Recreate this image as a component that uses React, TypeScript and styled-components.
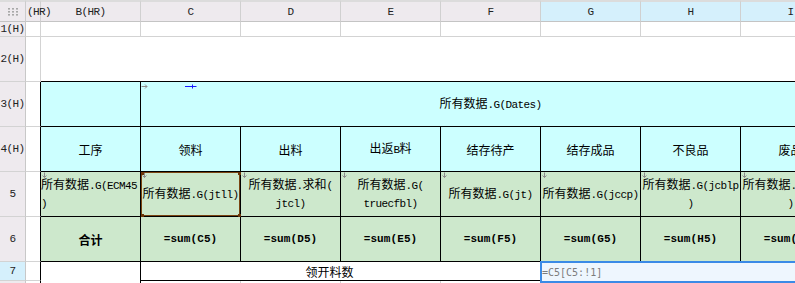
import React from "react";
import styled, { createGlobalStyle } from "styled-components";

const GRID = "#d3d3d3";
const BLACK = "#000000";
const HEAD_BG = "#eeeaee";
const HEAD_ACTIVE = "#d5f0fc";
const CYAN = "#ccffff";
const GREEN = "#cde8cc";

const GlobalStyle = createGlobalStyle`
  html, body { margin: 0; padding: 0; background: #ffffff; overflow: hidden; }
  #root { width: 795px; height: 283px; }
`;

const Viewport = styled.div`
  width: 795px;
  height: 283px;
  overflow: hidden;
  background: #ffffff;
`;

const Sheet = styled.div`
  display: grid;
  grid-template-columns: 26px 15px repeat(9, 100px);
  grid-template-rows: 22px 15px 45px 45px 45px 45px 45px 19px 20px;
  width: max-content;
  font-family: "Noto Sans CJK SC", "Noto Sans", sans-serif;
  font-size: 12px;
  color: #000;
`;

const Corner = styled.div`
  grid-column: 1;
  grid-row: 1;
  background: ${HEAD_BG};
  border-top: 2px solid #dcdcdc;
  border-right: 1px solid #cccccc;
  border-bottom: 1px solid #c4c4c4;
  display: flex;
  align-items: center;
  justify-content: center;
  position: relative;
  z-index: 3;
`;

const ColHead = styled.div<{ $col: number; $active?: boolean; $left?: boolean }>`
  grid-column: ${(p) => p.$col};
  grid-row: 1;
  background: ${(p) => (p.$active ? HEAD_ACTIVE : HEAD_BG)};
  border-top: 2px solid #dcdcdc;
  border-right: 1px solid #d0d0d0;
  border-bottom: 1px solid #c4c4c4;
  display: flex;
  align-items: center;
  justify-content: ${(p) => (p.$left ? "flex-start" : "center")};
  padding-left: ${(p) => (p.$left ? "1px" : "0")};
  overflow: visible;
  white-space: nowrap;
  min-width: 0;
  font-family: "Liberation Mono", monospace;
  font-size: 11px;
  letter-spacing: -0.6px;
  color: #222;
  position: relative;
  z-index: ${(p) => (p.$left ? 2 : 1)};
`;

const RowHead = styled.div<{ $row: number; $active?: boolean }>`
  grid-column: 1;
  grid-row: ${(p) => p.$row};
  background: ${(p) => (p.$active ? HEAD_ACTIVE : HEAD_BG)};
  border-right: 1px solid #c8c8c8;
  border-bottom: 1px solid #d3d3d3;
  display: flex;
  align-items: center;
  justify-content: center;
  white-space: nowrap;
  font-family: "Liberation Mono", monospace;
  font-size: 11px;
  letter-spacing: -0.6px;
  color: #222;
`;

type CellProps = {
  $col: string | number;
  $row: string | number;
  $bg?: string;
  $rb?: string;
  $bb?: string;
  $align?: "left" | "center";
  $bold?: boolean;
  $padRight?: number;
};

const Cell = styled.div<CellProps>`
  grid-column: ${(p) => p.$col};
  grid-row: ${(p) => p.$row};
  background: ${(p) => p.$bg ?? "#ffffff"};
  border-right: 1px solid ${(p) => p.$rb ?? GRID};
  border-bottom: 1px solid ${(p) => p.$bb ?? GRID};
  display: flex;
  flex-direction: column;
  justify-content: center;
  align-items: ${(p) => (p.$align === "left" ? "flex-start" : "center")};
  text-align: ${(p) => (p.$align === "left" ? "left" : "center")};
  padding-right: ${(p) => p.$padRight ?? 0}px;
  position: relative;
  min-width: 0;
  line-height: 15px;
  white-space: nowrap;
  font-weight: ${(p) => (p.$bold ? 700 : 400)};
`;

const Line = styled.div`
  display: block;
  white-space: nowrap;
`;

const Latin = styled.span`
  font-family: "Liberation Mono", "DejaVu Sans Mono", monospace;
  font-size: 11px;
  letter-spacing: -0.6px;
`;

const SumText = styled.span`
  font-family: "Liberation Mono", monospace;
  font-size: 11px;
  font-weight: 700;
  letter-spacing: 0.1px;
`;

const Marker = styled.svg`
  position: absolute;
  left: 0;
  top: 0;
`;

const BlueMark = styled.svg`
  position: absolute;
  left: 44px;
  top: 1px;
`;

const Selection = styled.div`
  position: absolute;
  inset: 0;
  border: 1px solid #7a4512;
  pointer-events: none;
`;

const Handle = styled.span<{ $x: "l" | "r"; $y: "t" | "b" }>`
  position: absolute;
  width: 3px;
  height: 3px;
  background: #6b3508;
  ${(p) => (p.$x === "l" ? "left: -1px;" : "right: -2px;")}
  ${(p) => (p.$y === "t" ? "top: -1px;" : "bottom: -2px;")}
`;

const Editor = styled.div`
  position: absolute;
  left: -1px;
  top: -1px;
  width: 262px;
  height: 22px;
  box-sizing: border-box;
  border: 2px solid #3a8ae6;
  background: #eef6fe;
  display: flex;
  align-items: center;
  padding-left: 0px;
  font-family: "DejaVu Sans Mono", monospace;
  font-size: 10px;
  color: #7c7c7c;
  z-index: 2;
`;

const Mixed: React.FC<{ text: string }> = ({ text }) => (
  <>
    {text
      .split(/([\x00-\x7F]+)/)
      .filter(Boolean)
      .map((s, i) =>
        /^[\x00-\x7F]+$/.test(s) ? <Latin key={i}>{s}</Latin> : <span key={i}>{s}</span>
      )}
  </>
);

const Lines: React.FC<{ lines: string[] }> = ({ lines }) => (
  <>
    {lines.map((l, i) => (
      <Line key={i}>
        <Mixed text={l} />
      </Line>
    ))}
  </>
);

const DownArrow = () => (
  <Marker width="7" height="7" viewBox="0 0 7 7">
    <path d="M3.5 0.5 V5.5 M1.5 3.5 L3.5 5.5 L5.5 3.5" stroke="#8c8c8c" strokeWidth="1" fill="none" />
  </Marker>
);

const RightArrow = () => (
  <Marker width="8" height="7" viewBox="0 0 8 7" style={{ top: 1 }}>
    <path d="M0.5 3.5 H6 M4 1.5 L6 3.5 L4 5.5" stroke="#8c8c8c" strokeWidth="1" fill="none" />
  </Marker>
);

const GridDots = () => (
  <svg width="12" height="9" viewBox="0 0 12 9">
    {[0, 1, 2].map((r) =>
      [0, 1, 2].map((c) => (
        <rect key={`${r}-${c}`} x={1 + c * 4} y={1 + r * 3} width="2" height="1.6" fill="#a8a8a8" />
      ))
    )}
  </svg>
);

const letters = ["B(HR)", "C", "D", "E", "F", "G", "H", "I", "J"];
const headers4 = ["工序", "领料", "出料", "出返B料", "结存待产", "结存成品", "不良品", "废品", "备注"];
const row5: { lines: string[]; left?: boolean }[] = [
  { lines: ["所有数据.G(ECM45", ")"], left: true },
  { lines: ["所有数据.G(jtll)"] },
  { lines: ["所有数据.求和(", "jtcl)"] },
  { lines: ["所有数据.G(", "truecfbl)"] },
  { lines: ["所有数据.G(jt)"] },
  { lines: ["所有数据.G(jccp)"] },
  { lines: ["所有数据.G(jcblp", ")"] },
  { lines: ["所有数据.G(jcfpl", ")"] },
  { lines: ["所有数据.G(bz)"] },
];
const sums = ["合计", "=sum(C5)", "=sum(D5)", "=sum(E5)", "=sum(F5)", "=sum(G5)", "=sum(H5)", "=sum(I5)", "=sum(J5)"];

export default function App() {
  return (
    <Viewport>
      <GlobalStyle />
      <Sheet>
        <Corner>
          <GridDots />
        </Corner>
        <ColHead $col={2} $left>
          (HR)
        </ColHead>
        {letters.map((l, i) => (
          <ColHead key={l} $col={i + 3} $active={i >= 5}>
            {l}
          </ColHead>
        ))}

        <RowHead $row={2}>1(H)</RowHead>
        <RowHead $row={3}>2(H)</RowHead>
        <RowHead $row={4}>3(H)</RowHead>
        <RowHead $row={5}>4(H)</RowHead>
        <RowHead $row={6}>5</RowHead>
        <RowHead $row={7}>6</RowHead>
        <RowHead $row={8} $active>
          7
        </RowHead>
        <RowHead $row={9} />

        {/* Row 1 */}
        <Cell $col={2} $row={2} />
        {letters.map((l, i) => (
          <Cell key={`r1-${l}`} $col={i + 3} $row={2} />
        ))}

        {/* Row 2 */}
        <Cell $col={2} $row={3} />
        <Cell $col="3 / 12" $row={3} $bb={BLACK} />

        {/* Row 3 */}
        <Cell $col={2} $row={4} $rb={BLACK} />
        <Cell $col={3} $row={4} $bg={CYAN} $rb={BLACK} $bb={BLACK} />
        <Cell $col="4 / 11" $row={4} $bg={CYAN} $rb={BLACK} $bb={BLACK}>
          <RightArrow />
          <BlueMark width="12" height="7" viewBox="0 0 12 7">
            <path d="M0 3.5 H11.5 M7.5 1.5 V5.5" stroke="#1a1aff" strokeWidth="1" fill="none" />
          </BlueMark>
          <Line>
            <Mixed text="所有数据.G(Dates)" />
          </Line>
        </Cell>
        <Cell $col={11} $row={4} $bg={CYAN} $rb={BLACK} $bb={BLACK} />

        {/* Row 4 */}
        <Cell $col={2} $row={5} $rb={BLACK} />
        {headers4.map((h, i) => (
          <Cell key={`r4-${i}`} $col={i + 3} $row={5} $bg={CYAN} $rb={BLACK} $bb={BLACK}>
            <Line>
              <Mixed text={h} />
            </Line>
          </Cell>
        ))}

        {/* Row 5 */}
        <Cell $col={2} $row={6} $rb={BLACK} />
        {row5.map((c, i) => (
          <Cell
            key={`r5-${i}`}
            $col={i + 3}
            $row={6}
            $bg={GREEN}
            $rb={BLACK}
            $bb={BLACK}
            $align={c.left ? "left" : "center"}
          >
            <DownArrow />
            <Lines lines={c.lines} />
            {i === 1 && (
              <Selection>
                <Handle $x="l" $y="t" />
                <Handle $x="r" $y="t" />
                <Handle $x="l" $y="b" />
                <Handle $x="r" $y="b" />
              </Selection>
            )}
          </Cell>
        ))}

        {/* Row 6 */}
        <Cell $col={2} $row={7} $rb={BLACK} />
        {sums.map((s, i) => (
          <Cell key={`r6-${i}`} $col={i + 3} $row={7} $bg={GREEN} $rb={BLACK} $bb={BLACK} $bold>
            {i === 0 ? <Line>{s}</Line> : <SumText>{s}</SumText>}
          </Cell>
        ))}

        {/* Row 7 */}
        <Cell $col={2} $row={8} $rb={BLACK} />
        <Cell $col={3} $row="8 / 10" $rb={BLACK} $bb="#ffffff" />
        <Cell $col="4 / 8" $row={8} $rb={BLACK} $bb={BLACK} $padRight={22}>
          <Line>领开料数</Line>
        </Cell>
        <Cell $col="8 / 12" $row={8} $bb={BLACK}>
          <Editor>=C5[C5:!1]</Editor>
        </Cell>

        {/* Row 8 */}
        <Cell $col={2} $row={9} $rb={BLACK} />
        {[4, 5, 6, 7, 8, 9, 10, 11].map((c) => (
          <Cell key={`r8-${c}`} $col={c} $row={9} />
        ))}
      </Sheet>
    </Viewport>
  );
}
